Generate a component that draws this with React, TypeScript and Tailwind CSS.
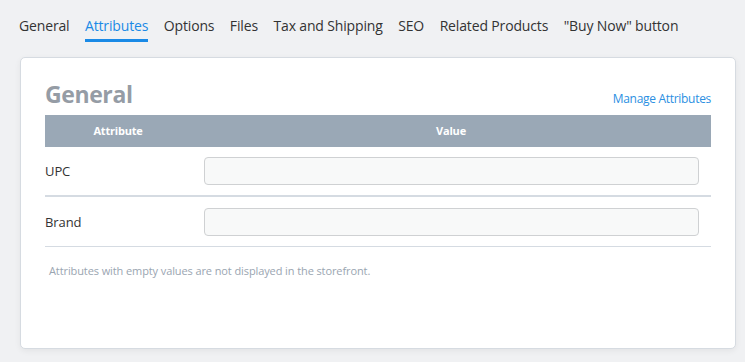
import React from 'react'

const tabs = ['General', 'Attributes', 'Options', 'Files', 'Tax and Shipping', 'SEO', 'Related Products', '"Buy Now" button']

const rows = [
    { label: 'UPC', border: 'border-b-2' },
    { label: 'Brand', border: 'border-b' },
]

const App = () => {
    return (
        <div className="bg-[#f0f1f3] h-[362px] w-[745px] pl-[19px] pt-[15px] font-['Open_Sans',sans-serif] text-[#333]">
            <div className="flex gap-[15.5px] text-[14px] leading-[21px] tracking-[-0.15px]">
                {tabs.map((t) => (
                    <div
                        key={t}
                        className={
                            t === 'Attributes'
                                ? 'text-[#1a8ae6] border-b-[3px] border-[#1a8ae6] pb-[3px]'
                                : 'pb-[6px]'
                        }
                    >
                        {t}
                    </div>
                ))}
            </div>
            <div className="mt-[15px] w-[716px] h-[292px] bg-white rounded-[5px] border border-[#d6dbe1] shadow-[0_2px_6px_rgba(0,0,0,0.06)] px-[24px] pt-[22px] ml-[1px]">
                <div className="flex items-end justify-between">
                    <h1 className="text-[23px] leading-[28px] font-bold text-[#959ca5] tracking-[-0.4px]">General</h1>
                    <a className="text-[12px] leading-[16px] text-[#2b8fe2] mb-[1px] tracking-[-0.3px]">Manage Attributes</a>
                </div>
                <div className="mt-[7px] flex h-[32px] items-center bg-[#9aa8b6] text-white text-[11px] font-bold tracking-[-0.2px]">
                    <div className="w-[146px] text-center">Attribute</div>
                    <div className="flex-1 text-center">Value</div>
                </div>
                {rows.map((r) => (
                    <div key={r.label} className={`flex h-[50px] items-center ${r.border} border-[#d5dbe2]`}>
                        <div className="w-[159px] text-[13px] tracking-[-0.1px] pt-[2px]">{r.label}</div>
                        <div className="h-[28px] w-[495px] rounded-[4px] border border-[#cfd1d3] bg-[#f8f9f9]"></div>
                    </div>
                ))}
                <p className="mt-[16px] ml-[4px] text-[11px] text-[#9aa5b1] tracking-[-0.1px]">
                    Attributes with empty values are not displayed in the storefront.
                </p>
            </div>
        </div>
    )
}

export default App
